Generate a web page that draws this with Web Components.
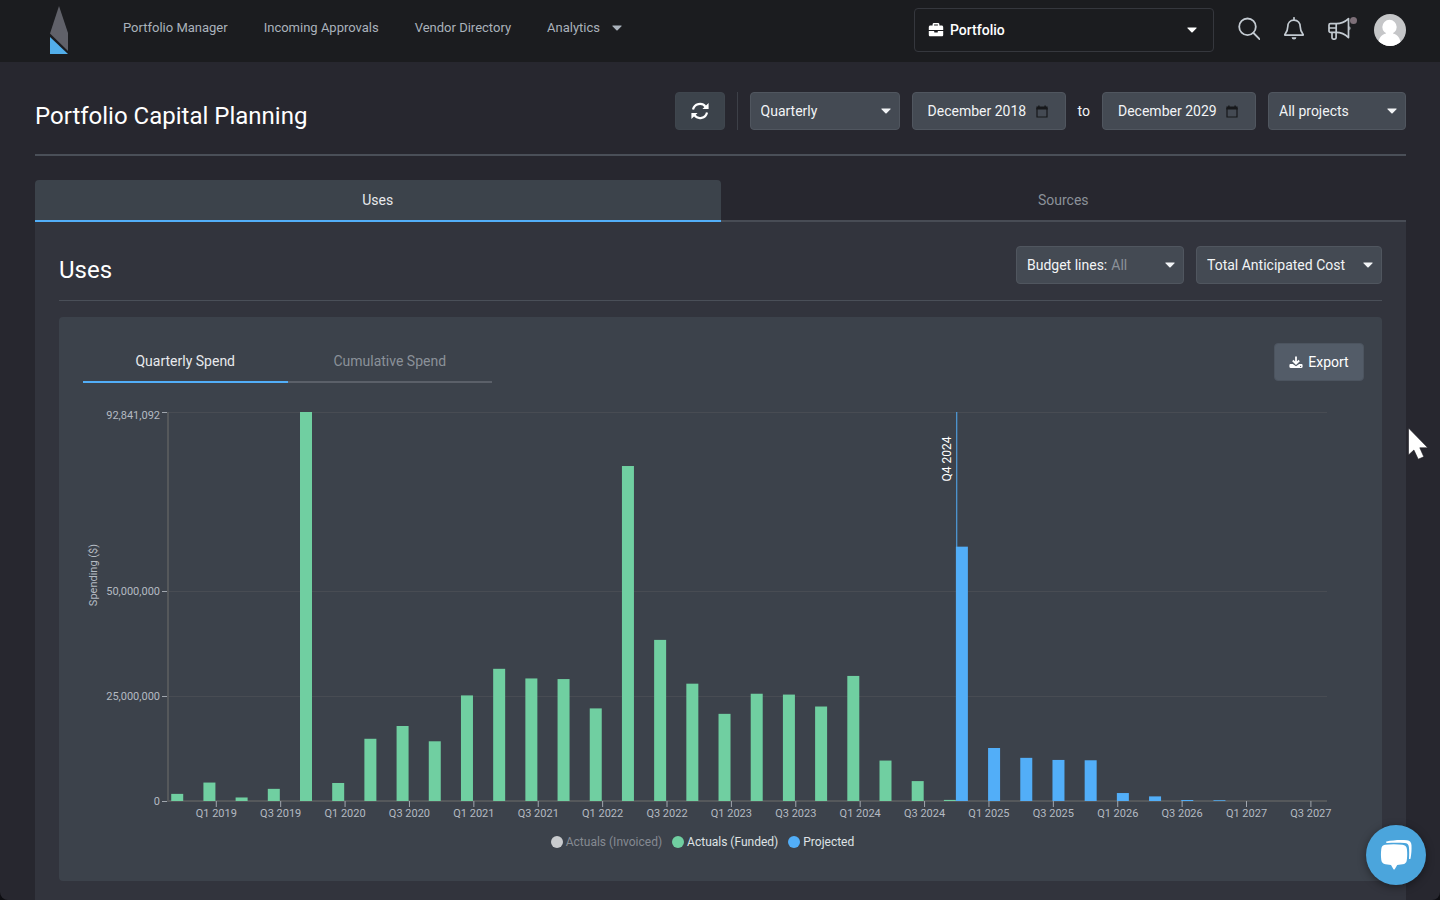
<!DOCTYPE html>
<html lang="en">
<head>
<meta charset="utf-8">
<title>Portfolio Capital Planning</title>
<style>
  :root {
    --bg: #27272f;
    --bar: #1b1c1f;
    --panel: #32343d;
    --card: #3c424b;
    --tab: #3c434b;
    --field: #444a53;
    --line: #4a4f58;
    --text: #f2f4f6;
    --muted: #8b9199;
    --soft: #aab2bb;
    --blue: #52aef8;
    --green: #70cfa1;
  }
  body {
    margin: 0;
    background: #0e0e12;
    color: var(--text);
    font: 14px/20px Roboto, "Liberation Sans", sans-serif;
  }
</style>
</head>
<body>
<planning-app></planning-app>

<script>
  const define = (tag, html, setup) => {
    const template = document.createElement('template');
    template.innerHTML = html;
    customElements.define(tag, class extends HTMLElement {
      constructor() {
        super();
        this.attachShadow({ mode: 'open' }).append(template.content.cloneNode(true));
      }
      connectedCallback() {
        if (setup && !this.ready) {
          this.ready = true;
          setup(this, this.shadowRoot);
        }
      }
    });
  };

  const ICONS = {
    caret: '<svg viewBox="0 0 10 6" width="10" height="6"><path d="M.9.4h8.2c.5 0 .7.6.4.9L5.6 5.2a.9.9 0 0 1-1.2 0L.5 1.3C.2 1 .4.4.9.4z" fill="currentColor"/></svg>',
    refresh: '<svg viewBox="0 0 18 18" width="18" height="18" fill="none" stroke="currentColor" stroke-width="2.2"><path d="M2 7.6A7.1 7.1 0 0 1 14.6 4.8"/><path d="M16 10.4A7.1 7.1 0 0 1 3.4 13.2"/><path d="M17.6.9v6.2h-6.200zM.4 17.100v-6.200h6.200z" fill="currentColor" stroke="none"/></svg>',
    briefcase: '<svg viewBox="0 0 16 16" width="16" height="16" fill="currentColor"><path d="M4.600 3.600V2.400c0-.8.6-1.400 1.400-1.400h4c.8 0 1.400.6 1.400 1.400v1.200h2.200c.9 0 1.600.7 1.600 1.600v2.900H.8V5.200c0-.9.7-1.600 1.600-1.600zm1.500 0h3.800V2.500H6.100z"/><path d="M.8 9h5.400v.9c0 .4.3.7.7.7h2.200c.4 0 .7-.3.700-.7V9h5.400v3.900c0 .8-.6 1.400-1.400 1.400H2.200c-.8 0-1.400-.6-1.400-1.400z"/></svg>',
    download: '<svg viewBox="0 0 14 14" width="14" height="14"><path d="M7 1.500v6.800M3.800 5.500 7 8.700l3.200-3.200" fill="none" stroke="currentColor" stroke-width="1.800"/><path d="M1.600 9h2.200L7 11.200 10.200 9h2.200c.7 0 1.200.5 1.200 1.200v1.600c0 .7-.5 1.200-1.200 1.200H1.600c-.7 0-1.200-.5-1.200-1.200v-1.600C.4 9.500.9 9 1.600 9z" fill="currentColor"/><circle cx="11.600" cy="11.400" r=".6" fill="#535c68"/></svg>',
    calendar: '<svg viewBox="0 0 12 13" width="12" height="13"><path d="M1 3.500h10v8.500H1z" fill="none" stroke="#17181b" stroke-width="1.200"/><path d="M.4 1.600h11.200v3H.4zM2.200.4h1.400v1.500H2.200zM8.400.4h1.400v1.500H8.400z" fill="#17181b"/></svg>',
    search: '<svg viewBox="0 0 24 24" width="24" height="24" fill="none" stroke="currentColor" stroke-width="1.800" stroke-linecap="round"><circle cx="11.500" cy="9.800" r="8.300"/><path d="m17.500 16 6 6"/></svg>',
    bell: '<svg viewBox="0 0 24 24" width="24" height="24" fill="none" stroke="currentColor" stroke-width="1.700" stroke-linejoin="round"><path d="M12 .8v2.400M12 3.200c-3.900 0-6.200 2.700-6.200 6.400 0 4.200-1.700 6.200-2.900 7.900-.2.400 0 .7.4.7h17.400c.4 0 .6-.3.400-.7-1.200-1.700-2.900-3.700-2.900-7.900 0-3.700-2.300-6.400-6.200-6.400z" stroke-linecap="round"/><path d="M9.600 20.200h4.800a2.400 2.200 0 0 1-4.800 0z" fill="currentColor" stroke="none"/></svg>',
    megaphone: '<svg viewBox="0 0 24 24" width="24" height="24" fill="none" stroke="currentColor" stroke-width="1.700" stroke-linejoin="round"><path d="M2.400 6.600h5.800c5.500 0 9.200-2 12.300-5v19c-3.100-3-6.800-5.200-12.300-5.200H2.400a1.400 1.400 0 0 1-1.400-1.400V8c0-.8.6-1.400 1.400-1.400z"/><path d="M8.200 6.600v8.800M1 11h7.200M4 15.400v5.400c0 .8.5 1.300 1.300 1.300h1.500c.8 0 1.300-.5 1.300-1.300v-5.400"/><path d="M21.300 9.200c1.600.5 1.600 3.500 0 4z" fill="currentColor" stroke="none"/></svg>'
  };

  define('ui-icon', `
    <style>:host { display: flex; flex: none; } svg { display: block; }</style>
    <span></span>
  `, (el, root) => { root.querySelector('span').innerHTML = ICONS[el.getAttribute('name')]; });

  define('select-field', `
    <style>
      :host {
        display: flex; position: relative; align-items: center; box-sizing: border-box;
        height: 38px; border: 1px solid #50565f; border-radius: 4px;
        background: var(--field); color: var(--text);
      }
      label { padding-left: 10px; white-space: nowrap; }
      label:empty { padding-left: 6px; }
      select {
        appearance: none; flex: 1; min-width: 0; height: 100%; margin: 0; border: 0;
        padding: 0 28px 0 4px; background: none; color: var(--value, inherit);
        font: inherit; outline: none;
      }
      option { background: #444a53; color: #f2f4f6; }
      .arrow { position: absolute; right: var(--arrow, 8px); pointer-events: none; }
      ::slotted(*) { margin-left: 13px; margin-right: -4px; }
    </style>
    <slot></slot><label for="control"></label><select id="control"></select><ui-icon class="arrow" name="caret"></ui-icon>
  `, (el, root) => {
    root.querySelector('label').textContent = el.getAttribute('label') || '';
    const select = root.querySelector('select');
    if (el.hasAttribute('name')) select.setAttribute('aria-label', el.getAttribute('name'));
    el.getAttribute('options').split('|').forEach(text => select.add(new Option(text)));
  });

  define('month-field', `
    <style>
      :host {
        display: flex; align-items: center; box-sizing: border-box; width: 154px; height: 38px;
        border: 1px solid #50565f; border-radius: 4px; padding: 0 17px 0 15px; background: var(--field);
      }
      input {
        flex: 1; min-width: 0; height: 100%; margin: 0; border: 0; padding: 0;
        background: none; color: var(--text); font: inherit; outline: none;
      }
    </style>
    <input type="text"><ui-icon name="calendar"></ui-icon>
  `, (el, root) => {
    const input = root.querySelector('input');
    input.value = el.getAttribute('value');
    input.setAttribute('aria-label', el.getAttribute('label'));
  });

  define('action-button', `
    <style>
      :host { display: block; }
      button {
        display: flex; align-items: center; justify-content: center; gap: 5px;
        box-sizing: border-box; width: 100%; height: 38px; margin: 0; padding: 0 14px;
        border: 1px solid var(--edge, #3f464e); border-radius: 4px;
        background: var(--fill, #3c434b); color: #fff; font: inherit;
      }
    </style>
    <button type="button"><slot></slot></button>
  `, (el, root) => {
    if (el.hasAttribute('label')) root.querySelector('button').setAttribute('aria-label', el.getAttribute('label'));
  });

  define('tab-bar', `
    <style>
      :host { display: flex; }
      button {
        flex: 1; box-sizing: border-box; height: 42px; margin: 0; padding: 0;
        border: 0; border-bottom: 2px solid var(--rule, #484c55);
        background: none; color: var(--muted); font: inherit;
      }
      button[aria-selected="true"] {
        border-bottom-color: var(--blue); border-radius: 4px 4px 0 0;
        background: var(--tab); color: #e8eaed;
      }
    </style>
  `, (el, root) => {
    el.setAttribute('role', 'tablist');
    el.getAttribute('tabs').split('|').forEach((text, i) => {
      const tab = document.createElement('button');
      tab.type = 'button';
      tab.setAttribute('role', 'tab');
      tab.setAttribute('aria-selected', String(i === 0));
      tab.textContent = text;
      root.append(tab);
    });
  });

  define('user-avatar', `
    <style>:host { display: block; } svg { display: block; border-radius: 50%; }</style>
    <svg viewBox="0 0 32 32" width="32" height="32" role="img" aria-label="Account">
      <path d="M0 0h32v32H0z" fill="#c5c6c8"/>
      <circle cx="15.500" cy="13" r="7.200" fill="#fff"/>
      <path d="M12 17h7v2.500c4.500 1 7.500 4 8 12.500H4c.5-8.500 3.500-11.500 8-12.500z" fill="#fff"/>
    </svg>
  `);

  define('app-header', `
    <style>
      :host {
        display: flex; align-items: center; box-sizing: border-box; height: 62px;
        padding: 0 34px 2px 50px; background: var(--bar);
      }
      .logo { display: block; margin-right: 55px; }
      .logo svg { display: block; }
      nav { display: flex; flex: 1; gap: 36px; padding-bottom: 4px; font-size: 13px; }
      nav a { display: flex; align-items: center; gap: 12px; color: var(--soft); text-decoration: none; white-space: nowrap; }
      select-field {
        width: 300px; height: 44px; background: none; border-color: #35373d; color: #fff;
        font-weight: 500; --value: #fff; --arrow: 16px;
      }
      .tools { display: flex; align-items: center; gap: 22px; padding-left: 22px; }
      .tools button { position: relative; margin: 0; padding: 0 0 2px; border: 0; background: none; color: #c3cad1; }
      .dot { position: absolute; top: 0; right: -5px; width: 7px; height: 7px; border-radius: 50%; background: #7d6f78; }
    </style>
    <a class="logo" href="#" aria-label="Home">
      <svg viewBox="0 0 18 48" width="18" height="48">
        <path d="M9 0 18 27v18L0 27.500z" fill="#606169"/>
        <path d="M0 31v17h18z" fill="#52aeea"/>
      </svg>
    </a>
    <nav>
      <a href="#">Portfolio Manager</a>
      <a href="#">Incoming Approvals</a>
      <a href="#">Vendor Directory</a>
      <a href="#">Analytics<ui-icon name="caret"></ui-icon></a>
    </nav>
    <select-field name="Scope" options="Portfolio"><ui-icon name="briefcase"></ui-icon></select-field>
    <div class="tools">
      <button type="button" aria-label="Search"><ui-icon name="search"></ui-icon></button>
      <button type="button" aria-label="Notifications"><ui-icon name="bell"></ui-icon></button>
      <button type="button" aria-label="Announcements"><ui-icon name="megaphone"></ui-icon><span class="dot"></span></button>
      <user-avatar></user-avatar>
    </div>
  `);

  define('page-heading', `
    <style>
      :host {
        display: flex; align-items: flex-end; justify-content: space-between; gap: 24px;
        border-bottom: 1px solid var(--line);
      }
      .tools { display: flex; align-items: center; gap: 12px; }
    </style>
    <slot name="title"></slot>
    <div class="tools"><slot></slot></div>
  `);

  /* Quarterly spend in millions of dollars, starting at Q4 2018. */
  const FUNDED = [1.7, 4.4, 0.84, 2.9, 92.841, 4.3, 14.85, 17.9, 14.25, 25.2, 31.55, 29.25,
    29.1, 22.1, 79.95, 38.45, 28, 20.8, 25.6, 25.4, 22.55, 29.85, 9.65, 4.75, 0.26];
  const PROJECTED = { 24: 60.7, 25: 12.65, 26: 10.3, 27: 9.8, 28: 9.72, 29: 1.9, 30: 1.1, 31: 0.24, 32: 0.18 };
  const QUARTERS = 36;
  const MAX = 92.841;

  define('spend-chart', `
    <style>
      :host { display: block; height: 440px; }
      svg { display: block; width: 100%; height: 100%; }
      text { fill: #b4bac2; font-size: 11px; }
      .now { fill: #fff; font-size: 12px; }
    </style>
    <svg role="img" aria-label="Quarterly spend"></svg>
  `, (el, root) => {
    const svg = root.querySelector('svg');
    const draw = () => {
      const left = 109, right = el.clientWidth - 55, top = 29, base = 418;
      const band = (right - left) / QUARTERS;
      const bar = Math.round(band * 0.38);
      const y = value => base - value / MAX * (base - top);
      let out = '';
      [[MAX, '92,841,092'], [50, '50,000,000'], [25, '25,000,000'], [0, '0']].forEach(([value, label]) => {
        const at = Math.floor(y(value));
        if (value) out += `<path d="M${left} ${at + 0.5}H${right}" stroke="#484c53"/>`;
        out += `<path d="M${left - 6} ${at + 0.5}h6" stroke="#a0a6ae"/>`;
        out += `<text x="${left - 8}" y="${at + (value === MAX ? 7 : 4)}" text-anchor="end">${label}</text>`;
      });
      out += `<path d="M${left} ${top}V${base}H${right}" fill="none" stroke="#55585b" stroke-width="2"/>`;
      for (let i = 1; i < QUARTERS; i += 2) {
        const x = left + band * (i + 0.5);
        const label = `Q${i % 4 === 1 ? 1 : 3} ${2019 + Math.floor((i - 1) / 4)}`;
        out += `<path d="M${x} ${base}v6" stroke="#a0a6ae"/>`;
        out += `<text x="${x}" y="434" text-anchor="middle">${label}</text>`;
      }
      const rect = (x, value, fill) =>
        `<rect x="${x}" y="${y(value)}" width="${bar}" height="${base - y(value)}" fill="${fill}"/>`;
      const now = left + band * 24.5;
      out += `<path d="M${now} ${top}V${base}" stroke="#52aef8"/>`;
      FUNDED.forEach((value, i) => { out += rect(left + band * i + band / 10, value, '#70cfa1'); });
      Object.entries(PROJECTED).forEach(([i, value]) => {
        out += rect(left + band * i + band / 10 + bar, value, '#52aef8');
      });
      out += `<text class="now" transform="translate(${now - 6} 76) rotate(-90)" text-anchor="middle">Q4 2024</text>`;
      out += `<text transform="translate(38 192) rotate(-90)" text-anchor="middle">Spending ($)</text>`;
      svg.innerHTML = out;
    };
    draw();
    new ResizeObserver(draw).observe(el);
  });

  define('chart-legend', `
    <style>
      :host { display: flex; justify-content: center; gap: 10px; }
      button {
        display: flex; align-items: center; gap: 3px; margin: 0; padding: 0; border: 0;
        background: none; color: #dfe2e5; font: inherit; font-size: 12px; line-height: 18px;
      }
      i { width: 12px; height: 12px; border-radius: 50%; }
      .off { color: #858a92; }
      .off i { background: #c9cbce; }
      .funded i { background: var(--green); }
      .projected i { background: var(--blue); }
    </style>
    <button type="button" class="off"><i></i>Actuals (Invoiced)</button>
    <button type="button" class="funded"><i></i>Actuals (Funded)</button>
    <button type="button" class="projected"><i></i>Projected</button>
  `);

  define('chart-card', `
    <style>
      :host { display: block; border-radius: 4px; background: var(--card); padding: 24px 0 30px; }
      header { display: flex; align-items: center; justify-content: space-between; padding: 0 18px 0 24px; }
      tab-bar { width: 409px; --rule: #5b6069; --tab: transparent; }
      action-button { width: 90px; --fill: #535c68; --edge: #4c545f; }
      chart-legend { padding: 10px 36px 0 0; }
    </style>
    <header>
      <tab-bar tabs="Quarterly Spend|Cumulative Spend"></tab-bar>
      <action-button><ui-icon name="download"></ui-icon>Export</action-button>
    </header>
    <spend-chart></spend-chart>
    <chart-legend></chart-legend>
  `);

  define('chat-launcher', `
    <style>
      :host { display: block; position: fixed; right: 14px; bottom: 15px; }
      button {
        display: block; width: 60px; height: 60px; margin: 0; padding: 0; border: 0; border-radius: 50%;
        background: #4ba5dc; box-shadow: 0 2px 8px rgba(0, 0, 0, .4);
      }
      svg { display: block; }
    </style>
    <button type="button" aria-label="Open chat">
      <svg viewBox="0 0 60 60" width="60" height="60">
        <path d="M20.500 16.500c7-1.700 15-1.900 20.500-1.200 3 .4 4.300 2 4.500 5 .2 4.800-.1 9-1 13.200-.1.700-1.500.9-1.500.1.300-4 .3-8-.1-11.500-.3-2.700-1.600-3.700-4.400-4-5-.5-11-.5-17.500-.1-.9.1-1.300-1.200-.5-1.500z" fill="#fff"/>
        <path d="M19 19.800c5.500-.7 12-.7 17.500 0 2.500.3 4.100 1.700 4.400 4.200.5 4 .4 7.500-.1 11.200-.3 2.500-1.800 3.700-4.200 4.100l-5.400.6-2.300 4c-.5.900-1.100.9-1.600 0l-2.300-4-5.500-.6c-2.600-.4-4-1.800-4.200-4.200-.5-4-.5-7.500 0-11.200.3-2.500 1.500-3.800 3.700-4.100z" fill="#fff"/>
      </svg>
    </button>
  `);

  define('mouse-pointer', `
    <style>:host { display: block; position: fixed; top: 427px; right: 10px; pointer-events: none; } svg { display: block; }</style>
    <svg viewBox="0 0 22 34" width="22" height="34">
      <path d="M.5 1v27l5.400-5 4.300 9.200 5.600-2.400-4-9h8z" fill="#fff" stroke="#1d1d24" stroke-width=".6"/>
    </svg>
  `);

  define('planning-app', `
    <style>
      :host {
        display: flex; flex-direction: column; min-height: 100vh; overflow: hidden;
        border-radius: 0 0 8px 8px; background: var(--bg);
      }
      main { display: flex; flex: 1; flex-direction: column; padding: 30px 34px 0 35px; }
      h1, h2 { margin: 0; color: #fff; font-size: 24px; line-height: 28px; font-weight: 400; }
      .page { padding-bottom: 24px; border-bottom-width: 2px; margin-bottom: 24px; }
      .divider { width: 1px; height: 38px; background: #3d4048; }
      .refresh { width: 50px; }
      .period { width: 150px; }
      .projects { width: 138px; }
      .panel { flex: 1; padding: 24px 24px 16px; background: var(--panel); }
      .section { padding-bottom: 16px; margin-bottom: 16px; }
      .lines { width: 168px; --value: #8b9199; }
      .cost { width: 186px; }
    </style>
    <app-header></app-header>
    <main>
      <page-heading class="page">
        <h1 slot="title">Portfolio Capital Planning</h1>
        <action-button class="refresh" label="Refresh"><ui-icon name="refresh"></ui-icon></action-button>
        <span class="divider"></span>
        <select-field class="period" name="Period" options="Quarterly|Monthly|Yearly"></select-field>
        <month-field label="From" value="December 2018"></month-field>
        <span>to</span>
        <month-field label="To" value="December 2029"></month-field>
        <select-field class="projects" name="Projects" options="All projects"></select-field>
      </page-heading>
      <tab-bar tabs="Uses|Sources"></tab-bar>
      <section class="panel">
        <page-heading class="section">
          <h2 slot="title">Uses</h2>
          <select-field class="lines" label="Budget lines:" options="All"></select-field>
          <select-field class="cost" name="Cost basis" options="Total Anticipated Cost"></select-field>
        </page-heading>
        <chart-card></chart-card>
      </section>
    </main>
    <chat-launcher></chat-launcher>
    <mouse-pointer></mouse-pointer>
  `);
</script>
</body>
</html>
